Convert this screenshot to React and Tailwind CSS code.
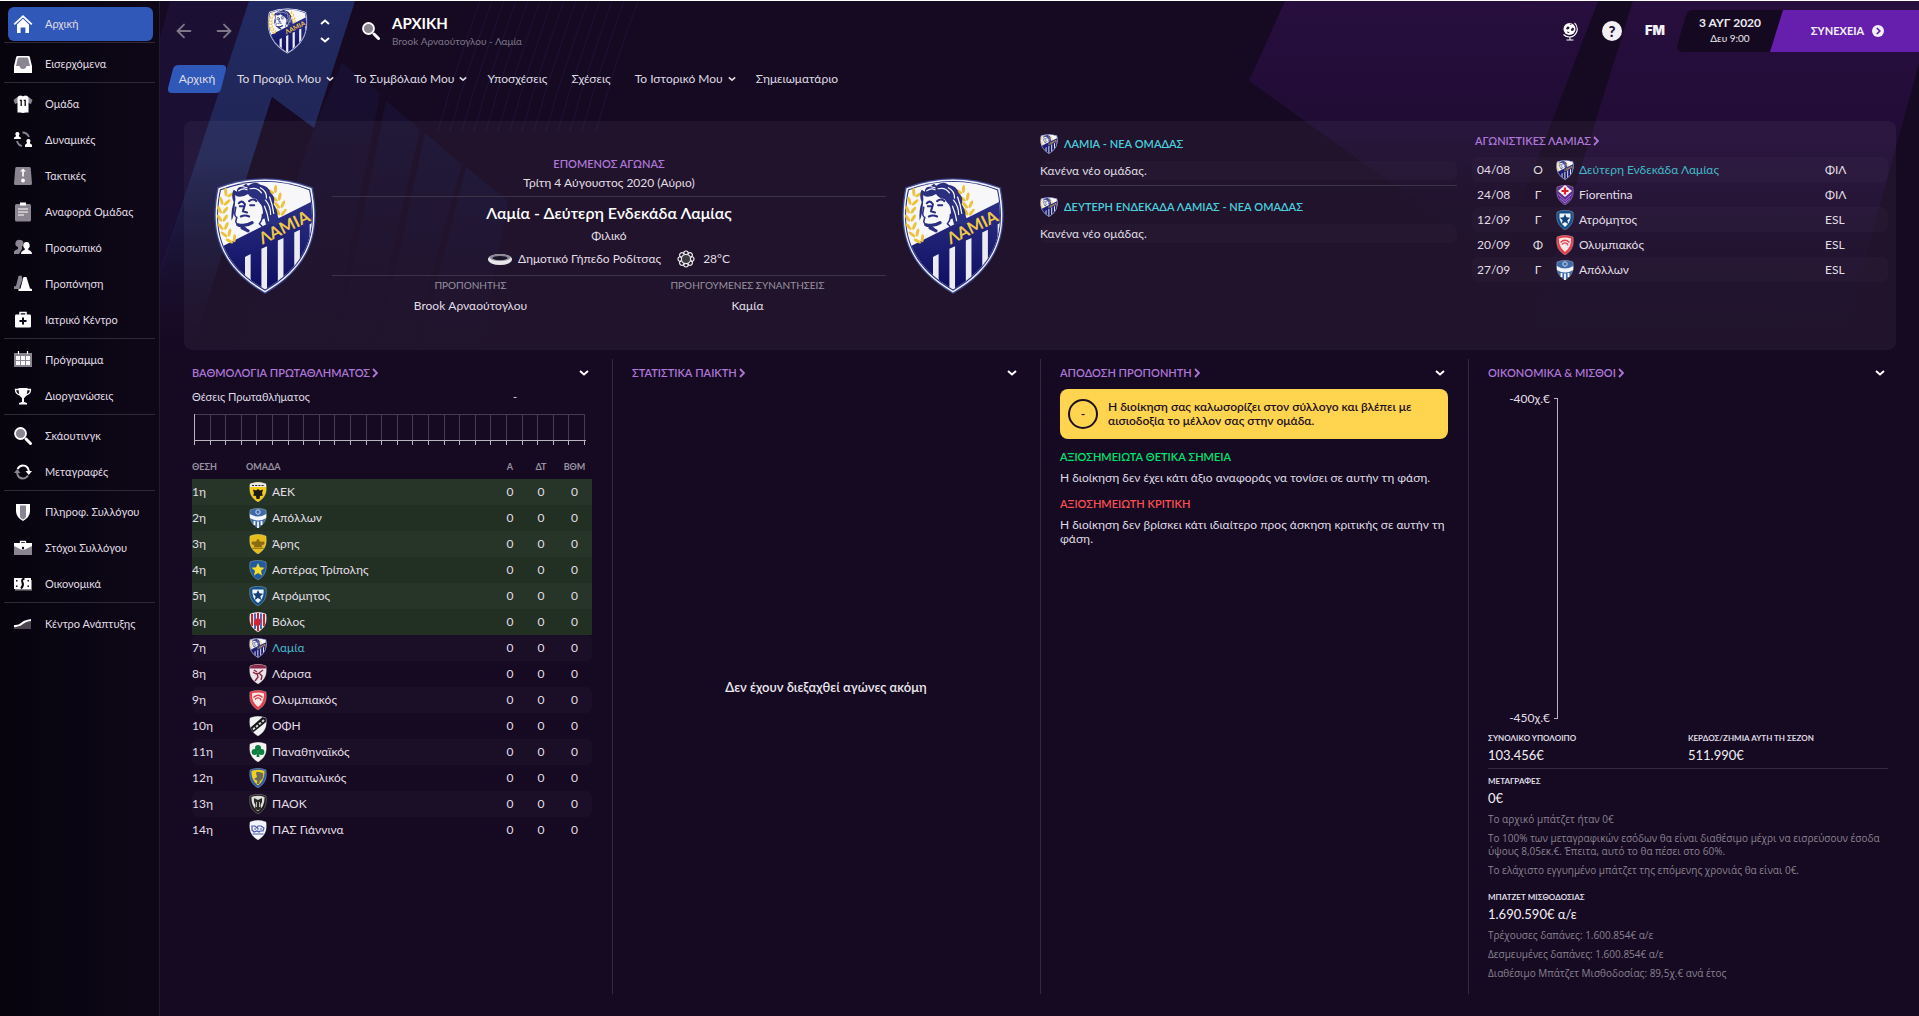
import cx from "clsx";
import { ArrowLeft, ArrowRight } from "lucide-react";

const SHIELD = "M1 2 Q9 -1.4 17 2 C18 10 16.5 15.5 9 20 C1.5 15.5 0 10 1 2Z";

const menu = [
  [{ id: "home", label: "Αρχική", active: true }],
  [{ id: "inbox", label: "Εισερχόμενα" }],
  [
    { id: "squad", label: "Ομάδα" },
    { id: "dynamics", label: "Δυναμικές" },
    { id: "tactics", label: "Τακτικές" },
    { id: "report", label: "Αναφορά Ομάδας" },
    { id: "staff", label: "Προσωπικό" },
    { id: "training", label: "Προπόνηση" },
    { id: "medical", label: "Ιατρικό Κέντρο" },
  ],
  [
    { id: "schedule", label: "Πρόγραμμα" },
    { id: "competitions", label: "Διοργανώσεις" },
  ],
  [
    { id: "scouting", label: "Σκάουτινγκ" },
    { id: "transfers", label: "Μεταγραφές" },
  ],
  [
    { id: "club", label: "Πληροφ. Συλλόγου" },
    { id: "vision", label: "Στόχοι Συλλόγου" },
    { id: "finances", label: "Οικονομικά" },
  ],
  [{ id: "development", label: "Κέντρο Ανάπτυξης" }],
];

const tabs = [
  { label: "Το Προφίλ Μου", drop: true },
  { label: "Το Συμβόλαιό Μου", drop: true },
  { label: "Υποσχέσεις" },
  { label: "Σχέσεις" },
  { label: "Το Ιστορικό Μου", drop: true },
  { label: "Σημειωματάριο" },
];

const fixtures = [
  { date: "04/08", venue: "Ο", team: "lamia", name: "Δεύτερη Ενδεκάδα Λαμίας", comp: "ΦΙΛ", own: true },
  { date: "24/08", venue: "Γ", team: "fiorentina", name: "Fiorentina", comp: "ΦΙΛ" },
  { date: "12/09", venue: "Γ", team: "atromitos", name: "Ατρόμητος", comp: "ESL" },
  { date: "20/09", venue: "Φ", team: "olympiakos", name: "Ολυμπιακός", comp: "ESL" },
  { date: "27/09", venue: "Γ", team: "apollon", name: "Απόλλων", comp: "ESL" },
];

const standings = [
  { team: "aek", name: "ΑΕΚ" },
  { team: "apollon", name: "Απόλλων" },
  { team: "aris", name: "Άρης" },
  { team: "asteras", name: "Αστέρας Τρίπολης" },
  { team: "atromitos", name: "Ατρόμητος" },
  { team: "volos", name: "Βόλος" },
  { team: "lamia", name: "Λαμία", own: true },
  { team: "larisa", name: "Λάρισα" },
  { team: "olympiakos", name: "Ολυμπιακός" },
  { team: "ofi", name: "ΟΦΗ" },
  { team: "panathinaikos", name: "Παναθηναϊκός" },
  { team: "panaitolikos", name: "Παναιτωλικός" },
  { team: "paok", name: "ΠΑΟΚ" },
  { team: "pas", name: "ΠΑΣ Γιάννινα" },
];

const W = "#fff";
const G = "#8a8590";

const menuIcons = {
  home: (
    <>
      <path fill={W} d="M9 0 18.4 8.8 17.2 10 9 2.4.8 10-.4 8.8Z" />
      <path fill={W} d="m9 3.8 6 5.6V18h-3.6v-5.6H6.6V18H3V9.400Z" />
    </>
  ),
  inbox: (
    <>
      <path fill={W} d="M3.500 1h11q1 0 1.300 1L18 11v7H0v-7l2.200-9q.3-1 1.300-1Z" />
      <path fill={G} d="M5 2.500h8q1 0 1.200 1L16 11h-3.500q-.6 3-3.500 3t-3.500-3H2L3.800 3.500q.2-1 1.200-1Z" />
    </>
  ),
  squad: (
    <>
      <path fill={G} d="M4 1.500-.5 5l1.500 4L5 7.500ZM14 1.500 18.500 5 17 9l-4-1.500Z" />
      <path fill={W} d="M4.500 1 7 .5q2 1.500 4 0l2.500.5 1 2v14.500H12L9 18l-3-.5H3.500V3Z" />
      <path stroke="#0a0512" strokeWidth="1.300" fill="none" d="M5.800 5.400h1.400V11M9.800 5.400h1.400V11" />
    </>
  ),
  dynamics: (
    <>
      <path fill={W} d="M3.500 1a2 2 0 0 1 1.300 3.500q0 1.500 2 2V8H0V6.500q2-.5 2-2A2 2 0 0 1 3.500 1ZM14.500 8a2 2 0 0 1 1.300 3.500q0 1.500 2.200 2.200V16h-7v-2.300q2-.7 2-2.200A2 2 0 0 1 14.500 8Z" />
      <path fill="none" stroke={G} strokeWidth="1.800" d="M8.500 1.500Q13 1.500 15 6M3 10q1 4 5 5" />
    </>
  ),
  tactics: (
    <>
      <path fill={G} d="M2.500 0h13q1 0 1.200 1L18 16.500q0 1.500-1.500 1.500h-15Q0 18 0 16.500L1.300 1q.2-1 1.200-1Z" />
      <path fill={W} d="m9 1.500 3 3h-2.200v5H8.200v-5H6Z" />
      <circle cx="9" cy="13.500" r="1.900" fill={W} />
    </>
  ),
  report: (
    <>
      <rect x="1" y="1" width="16" height="17.500" rx="1.500" fill={G} />
      <rect x="6" y="-.5" width="6" height="3" fill={W} />
      <path stroke={W} strokeWidth="1.200" d="M4 6h10M4 9h10M4 12h6" />
    </>
  ),
  staff: (
    <>
      <path fill={G} d="M6 1a3.200 3.500 0 0 1 2 6.500L8 10l-3 5H0v-2.500Q1 10.500 4 10V8A3.500 3.500 0 0 1 6 1Z" />
      <path fill={W} d="M12.500 3a3 3.500 0 0 1 1.800 6.500v1.500q3.700.8 3.700 4H7q0-3.200 3.700-4V9.500A3 3.500 0 0 1 12.500 3Z" />
    </>
  ),
  training: (
    <>
      <path fill={G} d="m4.500 1 3-.5 1 4L5 14H0v-2.500l2-.5Z" />
      <path fill={W} d="M9.500 2h3L16 13.500l2 .5v2H4.500v-2L6.500 13.500Z" />
    </>
  ),
  medical: (
    <>
      <path fill="none" stroke={W} strokeWidth="1.500" d="M6 4V1.500h6V4" />
      <rect x="1" y="3.500" width="16" height="13" rx="1.200" fill={W} />
      <path stroke="#0a0512" strokeWidth="2" d="M9 6.500v7M5.500 10h7" />
    </>
  ),
  schedule: (
    <>
      <path fill={G} d="M0 2h18v14H0Z" />
      <path stroke={W} strokeWidth="1.200" d="M4.500 0v3M13.500 0v3" />
      <path fill={W} d="M2 5h4v4H2Zm5 0h4v4H7Zm5 0h4v4h-4ZM2 10h4v4H2Zm5 0h4v4H7Zm5 0h4v4h-4Z" />
    </>
  ),
  competitions: (
    <>
      <path fill={W} d="M4.500 1h9q0 8-3.500 10v4l3 1v1.500H5V16l3-1v-4Q4.500 9 4.500 1Z" />
      <path fill="none" stroke={W} strokeWidth="1.300" d="M5 2.500H1.500Q1.500 7 6 8M13 2.500h3.500Q16.500 7 12 8" />
    </>
  ),
  scouting: (
    <>
      <circle cx="6.500" cy="6.500" r="5.500" fill={G} stroke={W} strokeWidth="1.800" />
      <path stroke={W} strokeWidth="3" strokeLinecap="round" d="m12 12 4.500 4.500" />
    </>
  ),
  transfers: (
    <>
      <path fill="none" stroke={W} strokeWidth="2" d="M3.500 6Q5.500 2.500 9 2.500q5 0 6 6" />
      <path fill={W} d="M11.500 8H18l-3.200 4Z" />
      <path fill="none" stroke={G} strokeWidth="2" d="M14 12.500q-2 3-5 3-5 0-6-6" />
      <path fill={G} d="M6.500 10H0l3.200-4Z" />
    </>
  ),
  club: (
    <>
      <path fill={W} d="M2 1h14v7q0 6-7 10-7-4-7-10Z" />
      <path fill={G} d="M6 2.500h6v11.500q-1 1.500-3 2.500-2-1-3-2.500Z" />
    </>
  ),
  vision: (
    <>
      <path fill="none" stroke={W} strokeWidth="1.300" d="M6.500 4V2.500h5V4" />
      <path fill={G} d="M0 6h18v10H0Z" />
      <path fill={W} d="M0 4h18v3l-7 3.500H7L0 7Z" />
      <circle cx="9" cy="9" r="1.200" fill="#0a0512" />
    </>
  ),
  finances: (
    <>
      <path fill={G} d="M1 5h17v10.500H1Z" />
      <path fill={W} d="M0 3h17v11H0Z" />
      <path fill="none" stroke="#0a0512" strokeWidth="2" d="M10.500 3.500q-3.500 1-2 4t-1.500 6" />
      <path fill="#0a0512" d="M2 5h1.500v1.500H2Zm0 5.500h1.500V12H2ZM13.500 5H15v1.500h-1.500Zm0 5.500H15V12h-1.500Z" />
    </>
  ),
  development: (
    <>
      <path fill="#4b4552" d="M0 12q5 1 8-3 2-2.500 9-3v8H0Z" />
      <path fill="none" stroke={W} strokeWidth="2.200" d="M0 11q5 .5 8-2.500 2.500-2.500 9-3.500" />
    </>
  ),
};

const badges = {
  aek: (
    <>
      <path d={SHIELD} fill="#f2cb12" />
      <path d="M1 2Q9-1.400 17 2v3H1Z" fill="#e8e8e8" />
      <path d="M3 3.500h12" stroke="#222" strokeDasharray="2 1.200" />
      <path d="M9 7l2 1.500 3-1-1 4 1 2-3 .5-.5 3H7.500L7 14l-3-.5 1-2-1-4 3 1Z" fill="#1a1a10" />
    </>
  ),
  apollon: (
    <>
      <path d={SHIELD} fill="#3f6aa8" />
      <path d="M.8 6Q9 11 17.200 6v4Q9 15 1 10Z" fill="#f4f6fa" />
      <path d="M5.500 13v4M12.500 13v4M9 13.500V20" stroke="#f4f6fa" strokeWidth="1.800" />
      <circle cx="9" cy="4" r="2.200" fill="none" stroke="#c8d6ea" />
    </>
  ),
  aris: (
    <>
      <path d={SHIELD} fill="#e5bd1a" />
      <path d="M3 8h4l2-3 2 3h4v2l-3 1 1 2H5l1-2-3-1ZM3 14.500h12" fill="#8a6c10" stroke="#8a6c10" strokeWidth=".8" />
    </>
  ),
  asteras: (
    <>
      <path d={SHIELD} fill="#1f5c9c" />
      <path d="m9 3 1.900 4.300 4.600.4-3.500 3.100 1 4.600L9 13 5 15.400l1-4.600-3.500-3.100 4.600-.4Z" fill="#f8dc2c" />
    </>
  ),
  atromitos: (
    <>
      <path d={SHIELD} fill="#14508c" />
      <path d="M3.500 3.500h11Q15.500 12 9 17 2.500 12 3.500 3.500Z" fill="#f2f6fa" />
      <path d="m9 4 1.500 3.300 3.700.4-2.800 2.500.8 3.700L9 12.100 5.800 13.900l.8-3.700-2.800-2.500 3.700-.4Z" fill="#14407c" />
    </>
  ),
  volos: (
    <>
      <path d={SHIELD} fill="#f0f0f4" />
      <path d="M3 2v12M9 1v18M15 2v12" stroke="#d21f2c" strokeWidth="2" />
      <path d="M6 1.500V17M12 1.500V17" stroke="#2446a8" strokeWidth="1.600" />
      <path d="M5 12q0-5 4-6l3 2-1 5-3 1Z" fill="#d8202c" />
    </>
  ),
  larisa: (
    <>
      <path d={SHIELD} fill="#ece4e8" />
      <path d="M1 2Q9-1.400 17 2v2.500H1Z" fill="#8c2848" />
      <path d="M4 8q3 3 6 1l4-3M8 9l1 4-3 4M10 9l3 3-1 4M5 6l3 2" stroke="#8c2848" strokeWidth="1.400" fill="none" />
    </>
  ),
  olympiakos: (
    <>
      <path d={SHIELD} fill="#e2404c" />
      <path d="M3 3.500Q9 1.500 15 3.500 15.500 12 9 17 2.500 12 3 3.500Z" fill="#f6e8e8" />
      <path d="M4.500 7.500q4.500-4.500 9 0M6 9.500q2-2.500 5-1l1 2" stroke="#e2404c" strokeWidth="1.300" fill="none" />
    </>
  ),
  ofi: (
    <>
      <path d={SHIELD} fill="#f2f2f2" />
      <path d="M1 12 13.500 1l3.500 1v4L4 16.500Q1.500 14 1 12Z" fill="#16161a" />
      <path d="M4 13.500 15 4" stroke="#d8d8d8" strokeWidth="2" strokeDasharray="2.500 1.500" />
    </>
  ),
  panathinaikos: (
    <>
      <path d={SHIELD} fill="#f4f6f4" />
      <g fill="#0c8040">
        <circle cx="9" cy="6" r="3" />
        <circle cx="5.600" cy="10" r="3" />
        <circle cx="12.400" cy="10" r="3" />
        <path d="M8.300 9h1.400l.8 6h-3Z" />
      </g>
    </>
  ),
  panaitolikos: (
    <>
      <path d={SHIELD} fill="#2c5ca8" />
      <path d="M2.500 3Q9 .5 15.500 3 16 12 9 17.500 2 12 2.500 3Z" fill="#f0d020" />
      <path d="M7 5q1-2 3-1l4 1q1 6-3 8l-1 3H7.500l1-3L5 11l3-2Z" fill="#6c6a58" />
    </>
  ),
  paok: (
    <>
      <path d={SHIELD} fill="#1c1a1a" />
      <path d="M2.500 3Q9 .5 15.500 3 16 12 9 17.500 2 12 2.500 3Z" fill="#dededa" />
      <path d="M5 4l4 2 4-2v4l-1.500 3 .5 4-3 1.500L6 15l.5-4L5 8Z" fill="#2a2828" />
      <path d="M7.500 8v5M10.500 8v5" stroke="#b8b8b4" />
    </>
  ),
  pas: (
    <>
      <path d={SHIELD} fill="#f2f4fa" />
      <path d="M3 6h3l2 2 1-2h3l3 2-1 3h-3l-1 1-2-1-3 1-2-2ZM3.500 14h11" fill="none" stroke="#4858b0" strokeWidth="1.200" />
      <path d="M5 9h8" stroke="#4858b0" strokeDasharray="2 1" />
    </>
  ),
  fiorentina: (
    <>
      <path d={SHIELD} fill="#5c2c94" />
      <path d="m9 0 7 6-7 6-7-6Z" fill="#f4f0f0" />
      <path d="M9 2.500v7M5.500 6h7" stroke="#d82030" strokeWidth="2.200" />
      <path d="m2.500 9.500 6.500 6 6.500-6M4 13.500 9 18l5-4.500" stroke="#b890dc" strokeWidth=".8" fill="none" />
    </>
  ),
};

const Laurel = ({ points }) =>
  points.map(([x, y, r]) => (
    <g key={`${x}-${y}`} transform={`translate(${x} ${y}) rotate(${r})`} fill="#edc23c">
      <ellipse cx="-2.700" cy="-1" rx="1.500" ry="4" transform="rotate(-32)" />
      <ellipse cx="2.700" cy="-1" rx="1.500" ry="4" transform="rotate(32)" />
    </g>
  ));

const LamiaCrest = ({ className }) => (
  <svg viewBox="1 .5 99 113" className={className} aria-hidden="true">
    <defs>
      <linearGradient id="crestBlue" x1="0" y1="0" x2="0" y2="1">
        <stop offset="0" stopColor="#2c3084" />
        <stop offset="1" stopColor="#0c0c60" />
      </linearGradient>
      <clipPath id="crestInner">
        <path d="M7.500 12.500Q50.500-4 93.500 12.500C101 50 95 83 50.500 109 6 83 0 50 7.500 12.500Z" />
      </clipPath>
    </defs>
    <path d="M4 9.500Q50.500-8 97 9.500C105 50 98 86 50.500 113.500 3 86-4 50 4 9.500Z" fill="#3c4890" />
    <path d="M5.200 10.500Q50.500-6.500 95.800 10.500C103.500 50 97 85 50.500 112 4 85-2.500 50 5.200 10.500Z" fill="#f4f4fa" />
    <path d="M6.600 11.700Q50.500-5 94.400 11.700C102 50 96 84 50.500 110.300 5 84-1 50 6.600 11.700Z" fill="#23277c" />
    <g clipPath="url(#crestInner)">
      <path d="M0 0H101V114H0Z" fill="#f7f7f9" />
      <path d="M0 71.500 101 21V114H0Z" fill="url(#crestBlue)" />
      <path
        d="M17 87l3-3v20h-3ZM31 77.500l5.500-3V108H31ZM47 69.500l5.500-2.500V114H47ZM63 61.500l5.500-2.500V108H63ZM79 53.500l5.500-2.500V98H79ZM94 45.500l3-1.500v40h-3Z"
        fill="#ecebf2"
      />
    </g>
    <Laurel points={[[15, 15, 28], [11, 23, 14], [9, 31, 6], [9, 39, 0], [10, 47, -8], [13, 54, -18], [18, 60, -28]]} />
    <Laurel points={[[58, 12, -28], [62, 19, -20], [65, 26, -8], [66, 33, 4]]} />
    <path
      fill="#2a2f80"
      d="M20 24q-3-7 0-12l3 2q0-5 5-5l4-3 2 2q7-5 12-1 8 1 10 8 5 4 3 11 4 6 4 12l3 6-5 3-6-2-3 3-2-8-3 1q3-8 0-14l-5-6q-6-1-8-5-6 4-12 2-1 8-1 12-1 8-3 12-1-9 2-18Z"
    />
    <path
      fill="none"
      stroke="#f7f7f9"
      strokeWidth="1.200"
      strokeLinecap="round"
      d="M25 13q4-3 8-1M36 11q7-2 11 4M46 10q6 3 6 10M51 22q5 6 5 14M55 19q3 8 4 16M29 9l4 1M50 28q3 7 4 14M22 18l1 4"
    />
    <g fill="none" stroke="#2a2f80" strokeLinecap="round" strokeLinejoin="round">
      <path strokeWidth="1.500" d="M22 29l-1 6q0 3 2 4l-1 4q2 6 7 4l5 5M48 36q0 6-3 9l4 4" />
      <path strokeWidth="2" d="M25 25q3-3 5 0M35 23q4-3 7 0M26 28h3M36 27h4M31 26l-2 7 4 1M27 38q4-2 8 0" />
      <path strokeWidth="3" d="M24 46q8 2 14-2M28 49l6 3" />
    </g>
    <text x="48" y="65.500" transform="rotate(-26.500 48 65.500)" fontSize="16" fontWeight="700" fill="#efc845" className="font-['Lato','Noto_Sans',sans-serif]">
      ΛΑΜΙΑ
    </text>
  </svg>
);

const TeamBadge = ({ team }) =>
  team === "lamia" ? (
    <LamiaCrest className="h-5 w-[18px]" />
  ) : (
    <svg viewBox="0 0 18 20" className="h-5 w-[18px]" aria-hidden="true">
      {badges[team]}
      <path d={SHIELD} fill="none" stroke="#ffffff" strokeOpacity=".35" strokeWidth=".8" />
    </svg>
  );

const Chevron = ({ className = "h-2 w-2.5", up }) => (
  <svg viewBox="0 0 10 8" className={className} fill="none" stroke="currentColor" strokeWidth="2" aria-hidden="true">
    <path d={up ? "M1 6 5 2.500 9 6" : "M1 2 5 5.500 9 2"} />
  </svg>
);

const SectionTitle = ({ children }) => (
  <h2 className="text-[11px] leading-4 font-semibold text-[#ae78d8]">
    <a href="#" className="flex items-center gap-0.5">
      {children}
      <svg viewBox="0 0 6 10" className="h-2.5 w-1.5" fill="none" stroke="currentColor" strokeWidth="1.800" aria-hidden="true">
        <path d="m1 1 4 4-4 4" />
      </svg>
    </a>
  </h2>
);

const PanelHead = ({ title }) => (
  <div className="flex items-center justify-between h-7">
    <SectionTitle>{title}</SectionTitle>
    <button title={title} className="p-[3px] text-white">
      <Chevron />
    </button>
  </div>
);

const Sidebar = () => (
  <nav className="w-40 shrink-0 border-r border-[#221a2e] bg-gradient-to-r from-[#07040e] to-[#0e0718] px-1 pt-[5px] text-[11px] text-[#e0dde4]">
    {menu.map((group, i) => (
      <ul
        key={group[0].id}
        className={cx("mb-[3px]", i < menu.length - 1 && "border-b border-[#2f2938]")}
      >
        {group.map((item) => (
          <li key={item.id} className="flex h-9 items-center">
            <a
              href="#"
              className={cx(
                "mr-0.5 ml-1 flex h-[34px] flex-1 items-center gap-[13px] rounded-md pl-1.5",
                item.active && "bg-[#3058b8]"
              )}
            >
              <svg viewBox="0 0 18 18" className="h-[18px] w-[18px] overflow-visible" aria-hidden="true">
                {menuIcons[item.id]}
              </svg>
              {item.label}
            </a>
          </li>
        ))}
      </ul>
    ))}
  </nav>
);

const Backdrop = () => (
  <svg
    viewBox="160 0 1759 350"
    preserveAspectRatio="none"
    className="absolute inset-x-0 top-0 h-[350px] w-full"
    aria-hidden="true"
  >
    <defs>
      <linearGradient id="bandBlue" x1="0" y1="0" x2="0" y2="1">
        <stop offset="0" stopColor="#222a62" />
        <stop offset=".45" stopColor="#202554" />
        <stop offset="1" stopColor="#1a1236" stopOpacity="0" />
      </linearGradient>
      <linearGradient id="bandPurple" x1="0" y1="0" x2="0" y2="1">
        <stop offset="0" stopColor="#270e3e" />
        <stop offset=".5" stopColor="#200c34" />
        <stop offset="1" stopColor="#180924" stopOpacity="0" />
      </linearGradient>
      <linearGradient id="facet" x1="0" y1="0" x2="0" y2="1">
        <stop offset="0" stopColor="#1c1a4a" stopOpacity=".4" />
        <stop offset="1" stopColor="#1c1440" stopOpacity="0" />
      </linearGradient>
    </defs>
    <path d="M170 0H249L161 273H159V40Z" fill="#1b0f34" />
    <path d="M249 0H355L314 127 272 96 192 350H159V273Z" fill="url(#bandBlue)" />
    <path d="M272 96 300 118 230 350H192Z" fill="#160a24" />
    <path d="M314 127 342 62 380 92 330 350H240Z" fill="url(#facet)" />
    <path d="M386 100 420 128 370 350H336Z" fill="url(#facet)" />
    <path d="M425 132 462 164 410 350H378Z" fill="url(#facet)" />
    <path d="M466 166 508 200 480 350H420Z" fill="url(#facet)" />
    <path d="M1285 0H1598L1530 178 1500 260 1249 80Z" fill="url(#bandPurple)" />
    <path d="M1633 0H1919V62L1840 350H1524Z" fill="url(#bandPurple)" />
    <g stroke="#25306c" strokeOpacity=".3" fill="none">
      {[480, 492, 504, 516, 528, 540, 552, 564, 576, 588, 600, 612, 624, 638].map((x) => (
        <path key={x} d={`M${x} 0Q${x - 22} 60 ${x - 42} 130`} />
      ))}
    </g>
  </svg>
);

const Header = () => (
  <header className="relative flex h-[62px] items-start justify-between pl-[13px]">
    <div className="flex h-[60px] items-center text-white">
      <button title="Πίσω" className="text-[#7d7787]">
        <ArrowLeft size={22} strokeWidth={2} />
      </button>
      <button title="Εμπρός" className="ml-[18px] text-[#7d7787]">
        <ArrowRight size={22} strokeWidth={2} />
      </button>
      <LamiaCrest className="ml-8 h-[46px] w-[41px]" />
      <div className="ml-2 flex flex-col gap-1">
        <button title="Προηγούμενο" className="p-[3px]"><Chevron up className="h-2 w-3" /></button>
        <button title="Επόμενο" className="p-[3px]"><Chevron className="h-2 w-3" /></button>
      </div>
      <button title="Αναζήτηση" className="ml-7">
        <svg viewBox="0 0 18 18" className="h-[18px] w-[18px]" aria-hidden="true">{menuIcons.scouting}</svg>
      </button>
      <div className="ml-3">
        <h1 className="text-[15px] leading-5 font-bold">ΑΡΧΙΚΗ</h1>
        <p className="text-[10px] leading-4 text-[#7d7787]">Brook Αρναούτογλου - Λαμία</p>
      </div>
    </div>

    <div className="mt-[9px] flex h-[42px] items-center">
      <button title="Κόσμος">
        <svg viewBox="0 0 16 19" className="h-[19px] w-4" fill="none" stroke="#fff" aria-hidden="true">
          <circle cx="7.500" cy="7" r="6" fill="#fff" stroke="none" />
          <path fill="#23103a" stroke="none" d="M5.500 4.500l2 .5-.5 2-2 .5-1-1ZM10.500 5.500l1.500 1-.5 2-2 .5-.7-1.500ZM5 9.500l2 .5.5 1-2-.3ZM7.500 1.800l2 .3-.5 1Z" />
          <path strokeWidth="1.100" d="M12.500.800Q16 4 15 9q-2 6-7.500 6Q4 15 1.500 12.500M8 15v3M4.500 18h7" />
        </svg>
      </button>
      <button title="Βοήθεια" className="ml-6 h-5 w-5 rounded-full bg-[#f2f0f4] text-[15px] leading-5 font-black text-[#23103a]">?</button>
      <button className="ml-[23px] font-['Inter',sans-serif] text-[13px] font-black text-[#f2f0f4]">FM</button>
      <div className="relative ml-3 h-[42px] w-[106px] text-center text-[#ece9ef]">
        <svg viewBox="0 0 106 42" className="absolute inset-0 h-full w-full" aria-hidden="true">
          <path d="M16 0H106L93 42H6Q-1 42 .5 35L9 5Q10.500 0 16 0Z" fill="#150922" />
        </svg>
        <div className="relative pt-1">
          <p className="text-xs leading-[18px] font-bold">3 ΑΥΓ 2020</p>
          <p className="text-[10px] leading-3">Δευ 9:00</p>
        </div>
      </div>
      <button className="-ml-[13px] flex h-[42px] w-[149px] items-center justify-center gap-2 bg-[#661fac] pl-1.5 text-[11px] font-bold text-[#f2f0f4] [clip-path:polygon(13px_0,100%_0,100%_100%,0_100%)]">
        ΣΥΝΕΧΕΙΑ
        <svg viewBox="0 0 12 12" className="h-3 w-3" aria-hidden="true">
          <circle cx="6" cy="6" r="6" fill="#f2f0f4" />
          <path d="m4.800 3 3 3-3 3" fill="none" stroke="#661fac" strokeWidth="1.700" />
        </svg>
      </button>
    </div>
  </header>
);

const Tabs = () => (
  <nav className="relative flex h-8 items-center gap-6 pl-[7px] text-xs text-[#dfdce3]">
    <a href="#" className="relative -mr-3.5 flex h-7 w-[60px] items-center justify-center">
      <svg viewBox="0 0 60 28" className="absolute inset-0 h-full w-full" aria-hidden="true">
        <path d="M12 0H55Q60 0 59 5L54 24Q53 28 49 28H5Q0 28 1 23L6 4Q7 0 12 0Z" fill="#3058b8" />
      </svg>
      <span className="relative">Αρχική</span>
    </a>
    {tabs.map((t) => (
      <a key={t.label} href="#" className={cx("flex items-center gap-[5px]", t.drop && "-mr-1")}>
        {t.label}
        {t.drop && <Chevron className="h-2 w-2" />}
      </a>
    ))}
  </nav>
);

const NextMatch = () => (
  <section className="col-span-2 flex items-center gap-4 pr-9 pl-[30px]">
    <LamiaCrest className="h-[116px] w-[102px] shrink-0" />
    <div className="flex-1 text-center text-xs text-[#e2dfe6]">
      <h2 className="text-[11px] leading-5 font-semibold text-[#ae78d8]">ΕΠΟΜΕΝΟΣ ΑΓΩΝΑΣ</h2>
      <p className="pb-1 leading-[18px]">Τρίτη 4 Αύγουστος 2020 (Αύριο)</p>
      <div className="border-y border-[#3d3348] pt-0.5 pb-0.5">
        <p className="text-base leading-7 font-semibold text-white">Λαμία - Δεύτερη Ενδεκάδα Λαμίας</p>
        <p className="leading-[18px]">Φιλικό</p>
        <p className="flex h-7 items-center justify-center">
          <svg viewBox="0 0 24 12" className="mr-1.5 h-3 w-6" aria-hidden="true">
            <ellipse cx="12" cy="6.500" rx="12" ry="5.500" fill="#e8e8ea" />
            <ellipse cx="12" cy="4.500" rx="10.500" ry="3.500" fill="#8d8a96" />
            <ellipse cx="12" cy="5" rx="7.500" ry="2" fill="#1c1428" />
          </svg>
          Δημοτικό Γήπεδο Ροδίτσας
          <svg viewBox="0 0 18 18" className="mr-2 ml-4 h-[18px] w-[18px]" aria-hidden="true">
            <g fill="none" stroke="#f0f0f0" strokeWidth="1.200">
              {[0, 45, 90, 135, 180, 225, 270, 315].map((a) => (
                <path key={a} d="M6.500 4.500Q6.500 1 9 1t2.500 3.500" transform={`rotate(${a} 9 9)`} />
              ))}
            </g>
            <circle cx="9" cy="9" r="4.600" fill="#3c3c40" stroke="#e8e8e8" strokeWidth="1.200" />
          </svg>
          28°C
        </p>
      </div>
      <div className="grid grid-cols-2">
        <div>
          <h3 className="text-[10px] leading-[18px] text-[#9893a0]">ΠΡΟΠΟΝΗΤΗΣ</h3>
          <p className="leading-6">Brook Αρναούτογλου</p>
        </div>
        <div>
          <h3 className="text-[10px] leading-[18px] text-[#9893a0]">ΠΡΟΗΓΟΥΜΕΝΕΣ ΣΥΝΑΝΤΗΣΕΙΣ</h3>
          <p className="leading-6">Καμία</p>
        </div>
      </div>
    </div>
    <LamiaCrest className="h-[116px] w-[102px] shrink-0" />
  </section>
);

const TeamNews = ({ title }) => (
  <div>
    <h2 className="flex h-[22px] items-center gap-1.5 text-[11px] font-semibold text-[#4ccfdf]">
      <LamiaCrest className="h-5 w-[18px]" />
      {title}
    </h2>
    <p className="mt-1.5 rounded-md bg-white/[.02] text-xs leading-[19px] text-[#dfdce3]">Κανένα νέο ομάδας.</p>
  </div>
);

const Fixtures = () => (
  <section className="pt-3 pr-2 pl-1">
    <div className="pl-[3px]">
      <SectionTitle>ΑΓΩΝΙΣΤΙΚΕΣ ΛΑΜΙΑΣ</SectionTitle>
    </div>
    <table className="mt-2 w-full text-xs text-[#e2dfe6]">
      <tbody>
        {fixtures.map((f) => (
          <tr key={f.date} className="h-[25px] odd:bg-white/[.02]">
            <td className="w-[51px] rounded-l-md pl-[5px]">{f.date}</td>
            <td className="w-[30px] text-center">{f.venue}</td>
            <td className="w-[26px] pl-[3px]"><TeamBadge team={f.team} /></td>
            <td className={f.own ? "text-[#40b9c6]" : undefined}>{f.name}</td>
            <td className="w-[63px] rounded-r-md">{f.comp}</td>
          </tr>
        ))}
      </tbody>
    </table>
  </section>
);

const Hero = () => (
  <div className="relative mt-[26px] grid min-h-[229px] grid-cols-4 rounded-lg bg-white/[.045]">
    <NextMatch />
    <section className="pt-3 pr-[11px]">
      <TeamNews title="ΛΑΜΙΑ - ΝΕΑ ΟΜΑΔΑΣ" />
      <div className="mt-[5px] border-t border-[#3d3348] pt-2.5">
        <TeamNews title="ΔΕΥΤΕΡΗ ΕΝΔΕΚΑΔΑ ΛΑΜΙΑΣ - ΝΕΑ ΟΜΑΔΑΣ" />
      </div>
    </section>
    <Fixtures />
  </div>
);

const League = () => (
  <section className="pr-5 pl-2">
    <PanelHead title="ΒΑΘΜΟΛΟΓΙΑ ΠΡΩΤΑΘΛΗΜΑΤΟΣ" />
    <div className="flex h-5 items-center justify-between text-[11px] text-[#dfdce3]">
      <span>Θέσεις Πρωταθλήματος</span>
      <span className="pr-[75px]">-</span>
    </div>
    <svg viewBox="0 0 392 32" preserveAspectRatio="none" className="mt-[7px] ml-0.5 h-8 w-[98%]" shapeRendering="crispEdges" aria-hidden="true">
      <path d="M0 .500H391" stroke="#453c50" />
      {Array.from({ length: 26 }, (_, i) => (
        <g key={i}>
          <path d={`M${i * 15.6 + 0.5} 0V26`} stroke={i ? "#453c50" : "#b9b5be"} />
          <path d={`M${i * 15.6 + 0.5} 26V31`} stroke="#b9b5be" />
        </g>
      ))}
      <path d="M0 26.500H392" stroke="#b9b5be" />
    </svg>
    <table className="mt-2 w-full text-xs text-[#e2dfe6]">
      <thead>
        <tr className="h-[25px] text-[9px] text-[#9893a0]">
          <th className="w-[54px] text-left">ΘΕΣΗ</th>
          <th className="text-left" colSpan={2}>ΟΜΑΔΑ</th>
          <th className="w-[30px]">Α</th>
          <th className="w-[32px]">ΔΤ</th>
          <th className="w-[35px]">ΒΘΜ</th>
        </tr>
      </thead>
      <tbody className="text-center">
        {standings.map((row, i) => (
          <tr
            key={row.team}
            className={cx("h-[26px]", i < 6 ? "bg-[#213023] odd:bg-[#263528]" : "odd:bg-white/[.025]")}
          >
            <td className={cx("text-left", i > 5 && "rounded-l-md")}>{i + 1}η</td>
            <td className="w-[26px] pl-[3px]"><TeamBadge team={row.team} /></td>
            <td className={cx("text-left", row.own && "text-[#40b9c6]")}>{row.name}</td>
            <td>0</td>
            <td>0</td>
            <td className={cx(i > 5 && "rounded-r-md")}>0</td>
          </tr>
        ))}
      </tbody>
    </table>
  </section>
);

const PlayerStats = () => (
  <section className="flex flex-col border-l border-[#342a40] pr-5 pl-[19px]">
    <PanelHead title="ΣΤΑΤΙΣΤΙΚΑ ΠΑΙΚΤΗ" />
    <p className="flex flex-1 items-center justify-center pb-1.5 text-[13px] font-semibold text-[#ece9ef]">
      Δεν έχουν διεξαχθεί αγώνες ακόμη
    </p>
  </section>
);

const ManagerPerformance = () => (
  <section className="border-l border-[#342a40] pr-5 pl-[19px] text-xs leading-[14px] text-[#dfdce3]">
    <PanelHead title="ΑΠΟΔΟΣΗ ΠΡΟΠΟΝΗΤΗ" />
    <div className="mt-0.5 flex h-[50px] items-center gap-2.5 rounded-lg bg-[#ffd54f] px-2 font-semibold text-[#1c1020]">
      <span className="flex h-[30px] w-[30px] shrink-0 items-center justify-center rounded-full border-2 border-[#1c1020]">-</span>
      <p>Η διοίκηση σας καλωσορίζει στον σύλλογο και βλέπει με αισιοδοξία το μέλλον σας στην ομάδα.</p>
    </div>
    <h3 className="mt-[11px] text-[11px] font-semibold text-[#00e36c]">ΑΞΙΟΣΗΜΕΙΩΤΑ ΘΕΤΙΚΑ ΣΗΜΕΙΑ</h3>
    <p className="mt-[7px]">Η διοίκηση δεν έχει κάτι άξιο αναφοράς να τονίσει σε αυτήν τη φάση.</p>
    <h3 className="mt-3 text-[11px] font-semibold text-[#fb5050]">ΑΞΙΟΣΗΜΕΙΩΤΗ ΚΡΙΤΙΚΗ</h3>
    <p className="mt-[7px]">Η διοίκηση δεν βρίσκει κάτι ιδιαίτερο προς άσκηση κριτικής σε αυτήν τη φάση.</p>
  </section>
);

const Figure = ({ label, value }) => (
  <div className="font-['Lato','Noto_Sans',sans-serif]">
    <h3 className="text-[8px] leading-4 font-bold text-[#dfdce3]">{label}</h3>
    <p className="text-[13px] leading-[18px] text-[#f2f0f4]">{value}</p>
  </div>
);

const Finances = () => (
  <section className="flex flex-col border-l border-[#342a40] pr-2 pl-[19px]">
    <PanelHead title="ΟΙΚΟΝΟΜΙΚΑ & ΜΙΣΘΟΙ" />
    <div className="mt-1 flex h-[335px] text-xs text-[#e2dfe6]">
      <div className="flex w-[62px] flex-col justify-between text-right">
        <span>-400χ.€</span>
        <span>-450χ.€</span>
      </div>
      <div className="my-[7px] ml-1 w-1 border-y border-r border-[#b9b5be]" />
    </div>
    <div className="grid grid-cols-2 border-b border-[#342a40] pt-1 pb-1">
      <Figure label="ΣΥΝΟΛΙΚΟ ΥΠΟΛΟΙΠΟ" value="103.456€" />
      <Figure label="ΚΕΡΔΟΣ/ΖΗΜΙΑ ΑΥΤΗ ΤΗ ΣΕΖΟΝ" value="511.990€" />
    </div>
    <div className="mt-1 space-y-1.5 font-['Open_Sans',sans-serif] text-[10px] leading-[13px] text-[#89848f]">
      <Figure label="ΜΕΤΑΓΡΑΦΕΣ" value="0€" />
      <p>Το αρχικό μπάτζετ ήταν 0€</p>
      <p>Το 100% των μεταγραφικών εσόδων θα είναι διαθέσιμο μέχρι να εισρεύσουν έσοδα ύψους 8,05εκ.€. Έπειτα, αυτό το θα πέσει στο 60%.</p>
      <p>Το ελάχιστο εγγυημένο μπάτζετ της επόμενης χρονιάς θα είναι 0€.</p>
    </div>
    <div className="mt-3 space-y-1.5 font-['Open_Sans',sans-serif] text-[10px] leading-[13px] text-[#89848f]">
      <Figure label="ΜΠΑΤΖΕΤ ΜΙΣΘΟΔΟΣΙΑΣ" value="1.690.590€ α/ε" />
      <p>Τρέχουσες δαπάνες: 1.600.854€ α/ε</p>
      <p>Δεσμευμένες δαπάνες: 1.600.854€ α/ε</p>
      <p>Διαθέσιμο Μπάτζετ Μισθοδοσίας: 89,5χ.€ ανά έτος</p>
    </div>
  </section>
);

const App = () => (
  <div className="flex min-h-screen border-t border-white bg-[#160922] font-['Lato','Noto_Sans',sans-serif]">
    <Sidebar />
    <main className="relative flex flex-1 flex-col">
      <Backdrop />
      <Header />
      <Tabs />
      <div className="flex flex-1 flex-col pr-[23px] pb-[22px] pl-6">
        <Hero />
        <div className="relative mt-[9px] grid flex-1 grid-cols-4">
          <League />
          <PlayerStats />
          <ManagerPerformance />
          <Finances />
        </div>
      </div>
    </main>
  </div>
);

export default App;
